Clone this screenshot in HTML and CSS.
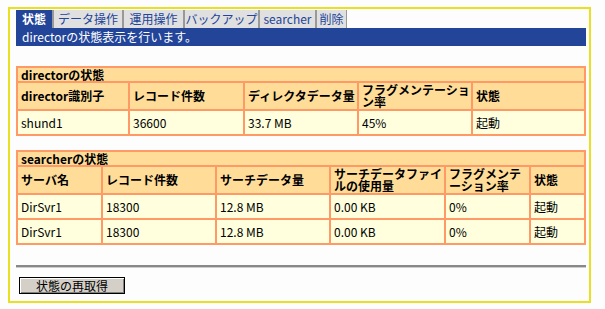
FILE: index.html
```html
<!DOCTYPE html>
<html lang="ja">
<head>
    <meta charset="UTF-8" />
    <title>状態</title>
    <link rel="stylesheet" href="styles.css">
</head>
<body>
    <div class="frame">
        <ul class="tabs">
            <li class="tab active">状態</li>
            <li class="tab">データ操作</li>
            <li class="tab">運用操作</li>
            <li class="tab">バックアップ</li>
            <li class="tab">searcher</li>
            <li class="tab">削除</li>
        </ul>
        <div class="info-bar">directorの状態表示を行います。</div>

        <table class="status-table director">
            <colgroup>
                <col class="w112" />
                <col class="w115" />
                <col class="w114" />
                <col class="w114" />
                <col />
            </colgroup>
            <tr class="title-row"><th colspan="5">directorの状態</th></tr>
            <tr class="head">
                <th>director識別子</th>
                <th>レコード件数</th>
                <th>ディレクタデータ量</th>
                <th>フラグメンテーション率</th>
                <th>状態</th>
            </tr>
            <tr class="row">
                <td>shund1</td>
                <td>36600</td>
                <td>33.7 MB</td>
                <td>45%</td>
                <td>起動</td>
            </tr>
        </table>

        <table class="status-table searcher">
            <colgroup>
                <col class="w85" />
                <col class="w114" />
                <col class="w114" />
                <col class="w115" />
                <col class="w85" />
                <col />
            </colgroup>
            <tr class="title-row"><th colspan="6">searcherの状態</th></tr>
            <tr class="head">
                <th>サーバ名</th>
                <th>レコード件数</th>
                <th>サーチデータ量</th>
                <th>サーチデータファイルの使用量</th>
                <th>フラグメンテーション率</th>
                <th>状態</th>
            </tr>
            <tr class="row">
                <td>DirSvr1</td>
                <td>18300</td>
                <td>12.8 MB</td>
                <td>0.00 KB</td>
                <td>0%</td>
                <td>起動</td>
            </tr>
            <tr class="row">
                <td>DirSvr1</td>
                <td>18300</td>
                <td>12.8 MB</td>
                <td>0.00 KB</td>
                <td>0%</td>
                <td>起動</td>
            </tr>
        </table>

        <hr class="divider" />
        <button type="button" class="reload-button">状態の再取得</button>
    </div>
</body>
</html>
```

FILE: styles.css
```css
html {
    height: 100%;
}
body {
    margin: 0;
    padding: 7px 8px;
    background: #fdfdfd;
    font-family: "Noto Sans CJK JP", "Liberation Sans", sans-serif;
    font-size: 12px;
    color: #000;
}
.frame {
    width: 570px;
    padding: 1px 3px 7px 6px;
    border: 2px solid #e8e020;
}
.tabs {
    display: flex;
    margin: 0;
    padding: 0;
    list-style: none;
    height: 18px;
}
.tab {
    height: 18px;
    line-height: 18px;
    padding: 0;
    background: #e0e0e0;
    color: #224499;
    border-right: 2px solid #999;
    box-sizing: border-box;
    text-align: center;
    white-space: nowrap;
}
.tab:nth-child(1) { width: 38px; }
.tab:nth-child(2) { width: 70px; }
.tab:nth-child(3) { width: 61px; }
.tab:nth-child(4) { width: 75px; }
.tab:nth-child(5) { width: 57px; }
.tab:nth-child(6) { width: 30px; border-right: 1px solid #999; }
.tab.active {
    background: #224499;
    color: #fff;
    font-weight: bold;
}
.info-bar {
    height: 18px;
    line-height: 17px;
    padding: 0 6px;
    background: #224499;
    color: #fff;
}
.status-table {
    width: 570px;
    border-collapse: collapse;
    table-layout: fixed;
    margin-top: 20px;
}
.status-table.searcher {
    margin-top: 14px;
}
.w85 { width: 85px; }
.w112 { width: 112px; }
.w114 { width: 114px; }
.w115 { width: 115px; }
.status-table th,
.status-table td {
    border: 2px solid #ff9966;
    padding: 0 0 0 3px;
    text-align: left;
    vertical-align: middle;
    line-height: 12px;
    overflow: hidden;
}
.status-table th {
    background: #ffdd99;
    font-weight: bold;
}
.status-table td {
    background: #ffffdd;
}
.title-row {
    height: 15px;
}
.head {
    height: 28px;
}
.row {
    height: 25px;
}
.divider {
    margin: 20px 0 0;
    height: 0;
    border: none;
    border-top: 2px solid #888;
    border-bottom: 1px solid #ccc;
}
.reload-button {
    display: block;
    margin: 9px 0 0 3px;
    width: 106px;
    height: 17px;
    padding: 0;
    font-family: "Noto Sans CJK JP", sans-serif;
    font-size: 12px;
    line-height: 13px;
    color: #000;
    background: #d4d0c8;
    border: 1px solid #000;
    box-shadow: inset 1px 1px 0 #fff, inset -1px -1px 0 #808080;
}
```
